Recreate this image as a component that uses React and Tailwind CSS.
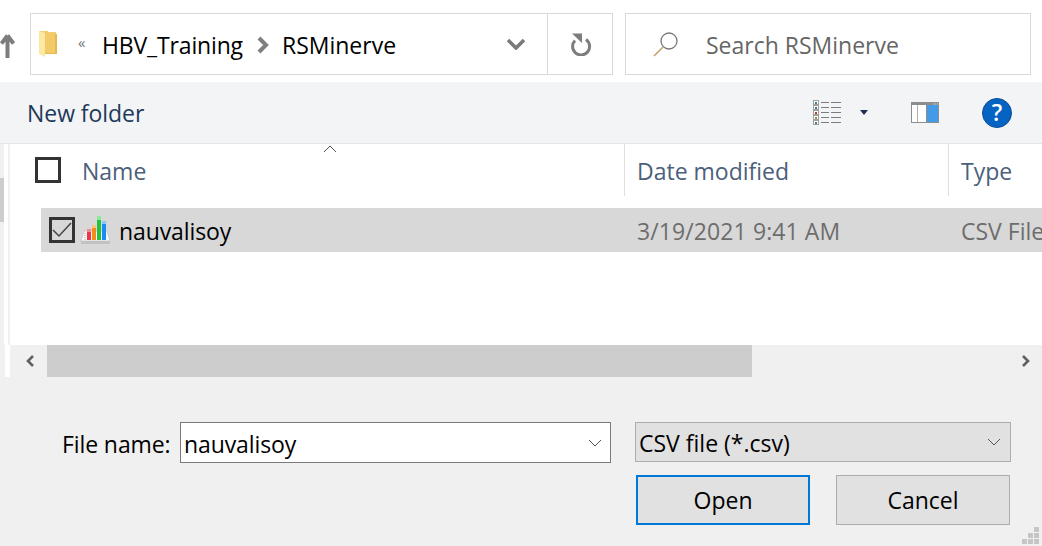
import React from "react";

const font = { fontFamily: '"Open Sans", "Noto Sans", sans-serif' };

function Folder() {
  return (
    <svg width="20" height="28" viewBox="0 0 20 28">
      <path d="M1 1h9l0 1h8v21H6z" fill="#f5cf6d" />
      <path d="M1 1l6 2v24l-6-3z" fill="#fde9a4" />
      <path d="M7 3h10v20H7z" fill="#f2cb68" />
      <path d="M17 4h2v20H7v-1h10z" fill="#e4b94f" />
    </svg>
  );
}

function ChartIcon() {
  return (
    <svg width="31" height="29" viewBox="0 0 31 29">
      <path d="M4 15h23l3 10H1z" fill="#f7f7f7" stroke="#cfcfcf" />
      <rect x="1" y="25" width="29" height="3" fill="#c2c2c2" />
      <rect x="7" y="13" width="4" height="11" fill="#e8384a" />
      <rect x="7" y="13" width="4" height="3" fill="#ef8d96" />
      <rect x="12" y="9" width="4" height="15" fill="#f58a1f" />
      <rect x="12" y="9" width="4" height="3" fill="#fbc57f" />
      <rect x="17" y="0" width="4" height="24" fill="#22c13f" />
      <rect x="17" y="0" width="4" height="4" fill="#8be99b" />
      <rect x="22" y="5" width="4" height="19" fill="#1b8df2" />
      <rect x="22" y="5" width="4" height="3" fill="#86c7fb" />
      <path d="M5 17v7" stroke="#b5b5b5" strokeDasharray="1 1" />
    </svg>
  );
}

function ViewIcon() {
  const colors = ["#3b7ea1", "#3b7ea1", "#c0392b", "#8a9a3a", "#3b7ea1"];
  return (
    <svg width="28" height="27" viewBox="0 0 28 27">
      {colors.map((c, i) => (
        <g key={i}>
          <rect x="0.5" y={1.5 + i * 5} width="5" height="4" fill="#fff" stroke="#a0a0a0" />
          <rect x="2" y={3 + i * 5} width="2" height="2" fill={c} />
        </g>
      ))}
      {[3, 8, 13, 18, 23].map((y) => (
        <g key={y}>
          <path d={`M8 ${y + 0.5}h8`} stroke="#7d7d7d" />
          <path d={`M18 ${y + 0.5}h10`} stroke="#7d7d7d" />
        </g>
      ))}
    </svg>
  );
}

function PaneIcon() {
  return (
    <svg width="28" height="21" viewBox="0 0 28 21">
      <rect x="0.5" y="0.5" width="27" height="20" fill="#fff" stroke="#8d8d8d" />
      <rect x="1" y="1" width="26" height="2" fill="#8d8d8d" />
      <path d="M6.5 3v17" stroke="#b0b0b0" />
      <rect x="15" y="3" width="12" height="17" fill="#439ae6" />
      <path d="M15.5 3v17" stroke="#8d8d8d" />
      <path d="M22 2h1M24 2h1M26 2h1" stroke="#d8d8d8" />
    </svg>
  );
}

function Help() {
  return (
    <svg width="30" height="30" viewBox="0 0 30 30">
      <circle cx="15" cy="15" r="14.5" fill="#0563c1" stroke="#0a4f9c" />
      <text x="15" y="23" textAnchor="middle" fill="#fff" fontSize="23" fontWeight="600" fontFamily="Open Sans, sans-serif">?</text>
    </svg>
  );
}

function Check({ checked }) {
  return (
    <div className="flex h-[26px] w-[26px] shrink-0 items-center justify-center border-[3px] border-[#333333]">
      {checked && (
        <svg width="20" height="18" viewBox="0 0 20 18">
          <path d="M1 9l6 6L19 2" fill="none" stroke="#444444" strokeWidth="1.5" />
        </svg>
      )}
    </div>
  );
}

function Chevron() {
  return (
    <svg width="14" height="8" viewBox="0 0 14 8">
      <path d="M1 1l6 6 6-6" fill="none" stroke="#555555" strokeWidth="1" />
    </svg>
  );
}

export default function App() {
  return (
    <div style={font} className="relative flex h-[546px] w-[1042px] flex-col overflow-hidden bg-white text-[23px] leading-none text-[#1a1a1a]">
      {/* address row */}
      <div className="flex h-[82px] shrink-0 items-start pt-[13px]">
        <div className="flex h-[62px] w-[30px] shrink-0 items-center">
          <svg width="15" height="24" viewBox="0 0 15 24" className="mt-[3px]">
            <path d="M7.5 1.5L13.5 9.5M7.5 1.5L1.5 9.5M7.5 2v22" fill="none" stroke="#7d7d7d" strokeWidth="4" />
          </svg>
        </div>
        <div className="flex h-[62px] w-[583px] shrink-0 items-center border border-[#d9d9d9]">
          <div className="ml-[7px] mt-[-1px] flex w-[40px] shrink-0"><Folder /></div>
          <span className="w-[24px] shrink-0 pb-[3px] text-[15px] text-[#777777]">«</span>
          <span className="pt-[2px] tracking-[-0.15px] text-black">HBV_Training</span>
          <svg width="14" height="18" viewBox="0 0 14 18" className="ml-[13px] mr-[12px] mt-[1px]">
            <path d="M3 2l7 7-7 7" fill="none" stroke="#7f7f7f" strokeWidth="4" />
          </svg>
          <span className="pt-[2px] text-black">RSMinerve</span>
          <div className="flex-1" />
          <svg width="20" height="12" viewBox="0 0 20 12" className="mr-[21px]">
            <path d="M2 2l8 8 8-8" fill="none" stroke="#7a7a7a" strokeWidth="3.6" />
          </svg>
          <div className="flex h-full w-[65px] items-center justify-center border-l border-[#d9d9d9] pl-[2px]">
            <svg width="22" height="23" viewBox="0 0 22 23">
              <path d="M5 7.5A8.5 8.5 0 1 0 16 6.5" fill="none" stroke="#7d7d7d" strokeWidth="3" />
              <path d="M2 0.5h10V10z" fill="#7d7d7d" />
            </svg>
          </div>
        </div>
        <div className="ml-[12px] flex h-[62px] w-[406px] shrink-0 items-center border border-[#d9d9d9]">
          <svg width="26" height="26" viewBox="0 0 26 26" className="ml-[27px] mr-[27px]">
            <circle cx="16" cy="10" r="8" fill="none" stroke="#777777" strokeWidth="1.3" />
            <path d="M10 16L1 25" stroke="#c49a6c" strokeWidth="1.5" />
          </svg>
          <span className="pt-[2px] text-[#666666]">Search RSMinerve</span>
        </div>
      </div>

      {/* toolbar */}
      <div className="flex h-[62px] shrink-0 items-center border-b border-[#e6e6e6] bg-[#f3f4f6]">
        <span className="ml-[27px] pt-[2px] tracking-[-0.05px] text-[#1e3a5a]">New folder</span>
        <div className="flex-1" />
        <ViewIcon />
        <svg width="8" height="5" viewBox="0 0 8 5" className="ml-[19px]">
          <path d="M0 0h8L4 5z" fill="#1e3050" />
        </svg>
        <div className="ml-[43px]"><PaneIcon /></div>
        <div className="ml-[43px] mr-[30px]"><Help /></div>
      </div>

      {/* list */}
      <div className="flex h-[201px] shrink-0">
        <div className="flex w-[4px] shrink-0 flex-col bg-[#f0f0f0] pt-[34px]">
          <div className="h-[44px] bg-[#cdcdcd]" />
        </div>
        <div className="w-[6px] shrink-0 border-r-2 border-[#f0f0f0]" />
        <div className="flex flex-1 flex-col overflow-hidden">
          <div className="flex h-[52px] shrink-0 text-[#4c607a]">
            <div className="relative flex w-[615px] shrink-0 items-center border-r border-[#e0e0e0] pl-[25px]">
              <Check />
              <span className="ml-[21px] pt-[2px]">Name</span>
              <svg width="14" height="8" viewBox="0 0 14 8" className="absolute left-[313px] top-[1px]">
                <path d="M1 7l6-6 6 6" fill="none" stroke="#555555" strokeWidth="1" />
              </svg>
            </div>
            <div className="flex w-[324px] shrink-0 items-center border-r border-[#e0e0e0] pl-[12px]">
              <span className="pt-[2px]">Date modified</span>
            </div>
            <div className="flex items-center whitespace-nowrap pl-[12px]">
              <span className="pt-[2px]">Type</span>
            </div>
          </div>
          <div className="ml-[31px] mt-[12px] flex h-[44px] w-[1001px] shrink-0 items-center whitespace-nowrap bg-[#d8d8d8]">
            <div className="ml-[8px]"><Check checked /></div>
            <div className="ml-[5px]"><ChartIcon /></div>
            <span className="ml-[8px] w-[518px] shrink-0 pt-[2px] tracking-[-0.1px] text-black">nauvalisoy</span>
            <span className="w-[324px] shrink-0 pt-[2px] tracking-[0.1px] text-[#6d6d6d]">3/19/2021 9:41 AM</span>
            <span className="pt-[2px] text-[#6d6d6d]">CSV File</span>
          </div>
        </div>
      </div>

      {/* horizontal scrollbar */}
      <div className="flex h-[32px] shrink-0">
        <div className="flex w-[13px] shrink-0">
          <div className="w-[5px] bg-[#f0f0f0]" />
          <div className="w-[5px] bg-white" />
          <div className="w-[3px] bg-[#f0f0f0]" />
        </div>
        <div className="flex w-[34px] shrink-0 items-center justify-center bg-[#f0f0f0]">
          <svg width="10" height="12" viewBox="0 0 10 12"><path d="M8 1L3 6l5 5" fill="none" stroke="#606060" strokeWidth="2.6" /></svg>
        </div>
        <div className="w-[705px] shrink-0 bg-[#cdcdcd]" />
        <div className="flex flex-1 items-center justify-end bg-[#f0f0f0] pr-[11px]">
          <svg width="10" height="12" viewBox="0 0 10 12"><path d="M2 1l5 5-5 5" fill="none" stroke="#606060" strokeWidth="2.6" /></svg>
        </div>
      </div>

      {/* footer */}
      <div className="flex flex-1 flex-col bg-[#f0f0f0] pt-[45px]">
        <div className="flex items-start pl-[62px]">
          <span className="flex h-[41px] w-[118px] shrink-0 items-center pt-[4px] tracking-[-0.1px] text-black">File name:</span>
          <div className="flex h-[41px] w-[431px] shrink-0 items-center justify-between border border-[#7a7a7a] bg-white pl-[3px] pr-[8px] text-black">
            <span className="pt-[4px] tracking-[-0.1px]">nauvalisoy</span>
            <Chevron />
          </div>
          <div className="ml-[24px] flex h-[40px] w-[376px] shrink-0 items-center justify-between border border-[#adadad] bg-[#e1e1e1] pl-[3px] pr-[9px] text-black">
            <span className="pt-[3px]">CSV file (*.csv)</span>
            <Chevron />
          </div>
        </div>
        <div className="mt-[12px] flex pl-[636px]">
          <div className="flex h-[50px] w-[174px] items-center justify-center border-2 border-[#0078d7] bg-[#e1e1e1] text-black">
            <span className="pt-[1px]">Open</span>
          </div>
          <div className="ml-[26px] flex h-[50px] w-[174px] items-center justify-center border border-[#adadad] bg-[#e1e1e1] text-black">
            <span className="pt-[1px]">Cancel</span>
          </div>
        </div>
      </div>

      {/* resize grip */}
      <svg width="18" height="18" viewBox="0 0 18 18" className="absolute bottom-[1px] right-[2px]">
        <path d="M12 0h5v5h-5zM6 6h5v5H6zM12 6h5v5h-5zM0 12h5v5H0zM6 12h5v5H6zM12 12h5v5h-5z" fill="#c6c6c6" />
      </svg>
    </div>
  );
}
